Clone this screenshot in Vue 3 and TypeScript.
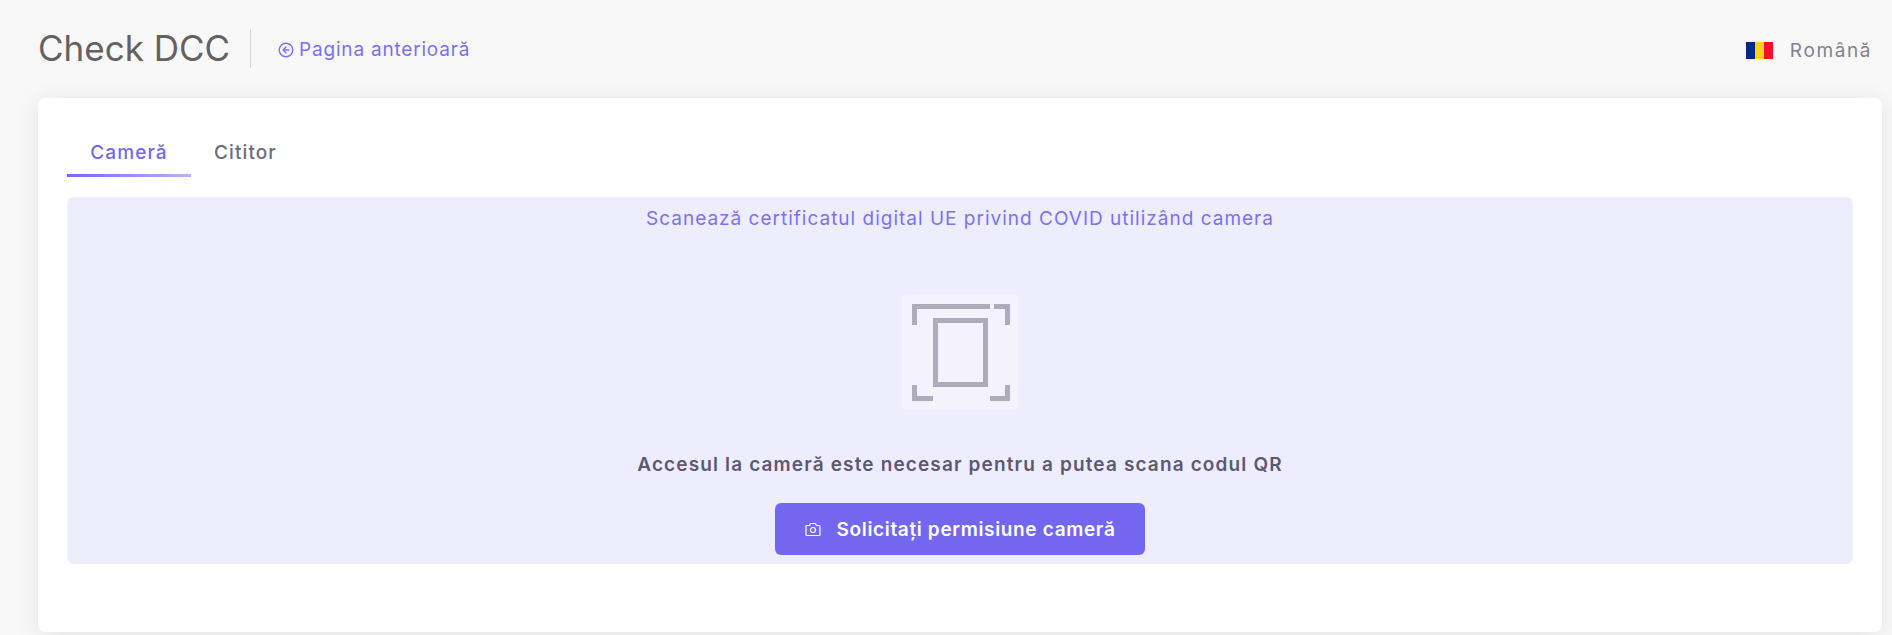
<template>
  <div class="page">
    <header class="header">
      <h1 class="header__title">Check DCC</h1>
      <a class="header__back">
        <svg class="header__back-icon" viewBox="0 0 16 16" fill="none" stroke="currentColor" stroke-width="1.4" stroke-linecap="round" stroke-linejoin="round">
          <circle cx="8" cy="8" r="6.8" />
          <path d="M8 5 5 8l3 3M5 8h6" />
        </svg>
        Pagina anterioară
      </a>
      <div class="header__lang">
        <span class="flag"><i class="flag__blue"></i><i class="flag__yellow"></i><i class="flag__red"></i></span>
        <span>Română</span>
      </div>
    </header>

    <main class="card">
      <nav class="tabs">
        <button
          v-for="(tab, i) in tabs"
          :key="tab"
          class="tab"
          :class="{ 'tab--active': i === active }"
          @click="active = i"
        >
          {{ tab }}
        </button>
      </nav>

      <section class="scan">
        <p class="scan__hint">Scanează certificatul digital UE privind COVID utilizând camera</p>
        <div class="scan__icon">
          <svg viewBox="0 0 116 116" width="116" height="116" fill="none" stroke="#aeacbb" stroke-width="5">
            <path d="M12.5 31V12.500H88M92 12.500h13.500V31M12.500 91v13.500H31M88 104.500h17.500V91" />
            <rect x="33.500" y="26.500" width="50" height="64" />
          </svg>
        </div>
        <p class="scan__message">Accesul la cameră este necesar pentru a putea scana codul QR</p>
        <button class="scan__button">
          <svg class="scan__camera" viewBox="0 0 16 16" fill="none" stroke="currentColor" stroke-width="1.2" stroke-linejoin="round">
            <path d="M1 5.500a1 1 0 0 1 1-1h2.500L5.700 2.500h4.600l1.200 2H14a1 1 0 0 1 1 1v8a1 1 0 0 1-1 1H2a1 1 0 0 1-1-1z" />
            <circle cx="8" cy="9" r="2.500" />
          </svg>
          Solicitați permisiune cameră
        </button>
      </section>
    </main>
  </div>
</template>

<script setup lang="ts">
import { ref } from 'vue'

const tabs: string[] = ['Cameră', 'Cititor']
const active = ref<number>(0)
</script>

<style>
html,
body {
  margin: 0;
  background: #f8f8f8;
}
</style>

<style scoped>
.page {
  height: 635px;
  box-sizing: border-box;
  padding: 0 10px 3px 38px;
  overflow: hidden;
  font-family: Inter, "Open Sans", sans-serif;
  color: #5e5873;
}

.header {
  display: flex;
  align-items: center;
  height: 98px;
  padding-bottom: 1px;
  box-sizing: border-box;
}

.header__title {
  margin: 0;
  padding-right: 20px;
  height: 39px;
  line-height: 39px;
  border-right: 1px solid #d6d6d6;
  font-size: 35px;
  font-weight: 400;
  color: #626262;
}

.header__back {
  display: flex;
  align-items: center;
  gap: 5px;
  margin-left: 27px;
  padding-top: 2px;
  font-size: 19px;
  letter-spacing: 0.8px;
  color: #7c71f1;
}

.header__back-icon {
  width: 16px;
  height: 16px;
}

.header__lang {
  display: flex;
  align-items: center;
  gap: 17px;
  margin-left: auto;
  margin-right: 10px;
  padding-top: 4px;
  font-size: 19px;
  letter-spacing: 1.6px;
  color: #83808f;
}

.flag {
  display: flex;
  width: 27px;
  height: 17px;
}

.flag i {
  flex: 1;
}

.flag__blue {
  background: #002b7f;
}

.flag__yellow {
  background: #fcd116;
}

.flag__red {
  background: #f5102a;
}

.card {
  height: 534px;
  box-sizing: border-box;
  padding: 0 29px;
  background: #fff;
  border-radius: 7px;
  box-shadow: 0 4px 24px rgba(34, 41, 47, 0.1);
}

.tabs {
  display: flex;
  padding-top: 33px;
  height: 79px;
  box-sizing: border-box;
}

.tab {
  width: 124px;
  height: 46px;
  padding: 0 0 4px;
  border: 0;
  background: none;
  font: inherit;
  font-size: 19px;
  font-weight: 500;
  letter-spacing: 1.1px;
  color: #6e6b7b;
  position: relative;
}

.tab + .tab {
  width: auto;
  margin-left: 23px;
}

.tab--active {
  color: #7367f0;
}

.tab--active::after {
  content: "";
  position: absolute;
  left: 0;
  right: 0;
  bottom: 0;
  height: 3px;
  background: linear-gradient(30deg, #7367f0, rgba(115, 103, 240, 0.5));
}

.scan {
  margin-top: 20px;
  height: 367px;
  display: flex;
  flex-direction: column;
  align-items: center;
  background: #eeedfd;
  border-radius: 7px;
}

.scan__hint {
  margin: 11px 0 0;
  line-height: 22px;
  font-size: 19px;
  letter-spacing: 1px;
  color: #7c71f1;
}

.scan__icon {
  width: 116px;
  height: 116px;
  margin-top: 64px;
  background: #f3f2fd;
  border-radius: 4px;
}

.scan__icon svg {
  display: block;
}

.scan__message {
  margin: 43px 0 0;
  line-height: 24px;
  font-size: 19px;
  font-weight: 600;
  letter-spacing: 1.14px;
}

.scan__button {
  display: flex;
  align-items: center;
  justify-content: center;
  gap: 16px;
  width: 370px;
  height: 52px;
  margin-top: 26px;
  border: 0;
  border-radius: 6px;
  background: #7367f0;
  color: #fff;
  font: inherit;
  font-size: 19px;
  font-weight: 600;
  letter-spacing: 0.66px;
}

.scan__camera {
  width: 16px;
  height: 16px;
}
</style>
